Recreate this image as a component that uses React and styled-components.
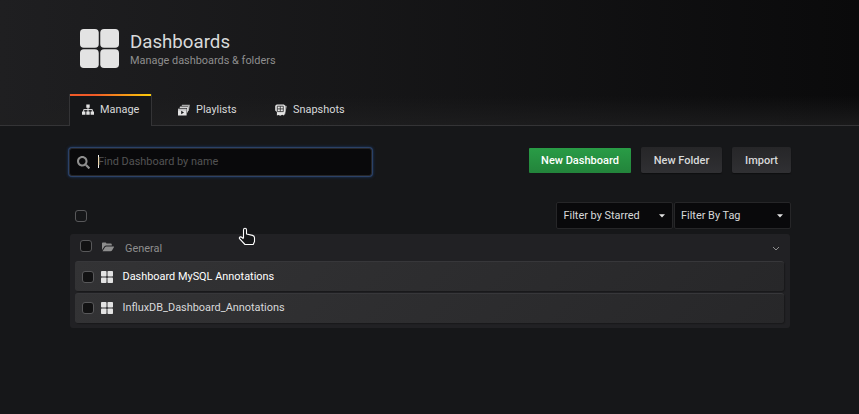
import React from "react";
import styled, { createGlobalStyle, css } from "styled-components";
import { FaSearch } from "react-icons/fa";

const GlobalStyle = createGlobalStyle`
  * { box-sizing: border-box; }
  html, body { margin: 0; background: #161719; }
  body {
    font-family: Roboto, "Liberation Sans", sans-serif;
    font-size: 10.92px;
    line-height: 16px;
    color: #d8d9da;
    overflow: hidden;
  }
`;

const Page = styled.div`
  position: relative;
  width: 859px;
  height: 414px;
  background: #161719;
`;

const Header = styled.header`
  display: flex;
  flex-direction: column;
  justify-content: space-between;
  height: 126px;
  padding: 29px 69px 0;
  border-bottom: 1px solid #343436;
  background:
    linear-gradient(180deg, rgba(31, 31, 32, 0) 96px, rgba(31, 31, 32, 0.75) 125px),
    linear-gradient(90deg, #1f1f21 0%, #0a0a0b 100%);
`;

const Title = styled.div`
  display: flex;
  padding-left: 11px;
  gap: 11px;
`;

const TitleText = styled.div`
  padding-top: 2px;
`;

const Heading = styled.h1`
  margin: 0;
  font-size: 18.7px;
  font-weight: 400;
  line-height: 22px;
`;

const Subtitle = styled.div`
  color: #8e8e8e;
  line-height: 15px;
`;

const Tabs = styled.nav`
  display: flex;
  height: 32px;
  margin-bottom: -1px;
`;

const Tab = styled.a`
  display: flex;
  align-items: center;
  gap: 6px;
  width: ${(p) => p.$width}px;
  padding: 0 0 0 ${(p) => p.$inset}px;
  border: 1px solid transparent;
  border-width: 0 1px;
  svg { margin-top: -1px; }
  ${(p) =>
    p.$active &&
    css`
      border-color: #343436;
      background: linear-gradient(90deg, #f05a28 30%, #fbca0a 99%) top / 100% 2px no-repeat, #161719;
    `}
`;

const Body = styled.main`
  width: 722px;
  margin-left: 69px;
  padding-top: 21px;
`;

const Actions = styled.div`
  display: flex;
  gap: 10px;
  height: 30px;
`;

const Search = styled.label`
  display: flex;
  align-items: center;
  width: 303px;
  height: 28px;
  margin: 1px auto 0 0;
  padding: 0 0 0 7px;
  border: 1px solid #262628;
  border-radius: 3px;
  background: #09090b;
  box-shadow: 0 0 0 1px #2b4166, 0 0 3px 1px #1c3c6b;
  color: #8e8e8e;
  svg { margin-top: 1px; }
`;

const Caret = styled.span`
  width: 1px;
  height: 13px;
  margin: -2px 0 0 8px;
  background: #f4f4f4;
`;

const Placeholder = styled.span`
  margin: -1px 0 0 -1px;
  color: #535354;
`;

const Button = styled.button`
  width: ${(p) => p.$width}px;
  height: 26px;
  padding: 0;
  border: 0;
  border-radius: 2px;
  font: 500 11px/27px Roboto, sans-serif;
  color: #d8d9da;
  background: linear-gradient(180deg, #262628, #303033);
  box-shadow: 0 1px 1px #0e0f10;
  ${(p) =>
    p.$primary &&
    css`
      height: 25px;
      margin-top: 1px;
      line-height: 24px;
      color: #fff;
      border-radius: 1px;
      background: linear-gradient(180deg, #299c46, #23843b);
      box-shadow: none;
    `}
`;

const Filters = styled.div`
  display: flex;
  gap: 1px;
  height: 27px;
  margin: 25px 0 5px;
  padding-left: 6px;
`;

const Check = styled.span`
  flex: none;
  width: 12px;
  height: 12px;
  border: 1px solid #58585a;
  border-radius: 3px;
  background: #121213;
`;

const FilterCheck = styled(Check)`
  margin: 8px auto 0 0;
  background: transparent;
`;

const Select = styled.div`
  display: flex;
  align-items: center;
  justify-content: space-between;
  width: ${(p) => p.$width}px;
  padding: 0 ${(p) => p.$end}px 0 ${(p) => p.$inset}px;
  border: 1px solid #262628;
  border-radius: 2px;
  background: #09090b;
  svg { margin-top: 1px; }
`;

const Section = styled.section`
  display: flex;
  flex-direction: column;
  gap: 2px;
  width: 720px;
  height: 94px;
  margin-left: 1px;
  padding: 0 6px 0 5px;
  border-radius: 3px;
  background: #212124;
`;

const SectionHead = styled.div`
  display: flex;
  height: 25px;
  padding: 6px 4px 0 5px;
  color: #8e8e8e;
`;

const FolderSvg = styled.svg`
  margin: 2px 10px 0;
`;

const SectionName = styled.span`
  flex: 1;
  padding-top: 1px;
`;

const Item = styled.div`
  display: flex;
  height: 30px;
  padding: 9px 0 0 7px;
  border-top: 1px solid #37373a;
  border-radius: 3px;
  background: linear-gradient(135deg, #333335, #272729);
  box-shadow: 1px 1px 1px #19191b;
  & > svg { margin: 0 10px 0 7px; }
  & + & { padding-top: 8px; }
`;

const ItemName = styled.span`
  margin: -2px 0 0 -0.5px;
  color: ${(p) => (p.$bright ? "#ffffff" : "#d8d9da")};
`;

const Pointer = styled.svg`
  position: absolute;
  left: 238px;
  top: 227px;
`;

function Grid({ size, gap, radius }) {
  const tile = (size - gap) / 2;
  const far = tile + gap;
  return (
    <svg width={size} height={size} fill="#e3e3e3">
      {[[0, 0], [far, 0], [0, far], [far, far]].map(([x, y]) => (
        <rect key={`${x}-${y}`} x={x} y={y} width={tile} height={tile} rx={radius} />
      ))}
    </svg>
  );
}

function SitemapIcon() {
  return (
    <svg width="12" height="11" viewBox="0 0 12 11" fill="#e3e3e3">
      <path d="M4.3.4h3.4v3.4H4.3zM0 7.5h3.4v3.3H0zM4.3 7.5h3.4v3.3H4.3zM8.6 7.5H12v3.3H8.6z" />
      <path d="M6 3v5M1.7 8V5.6h8.6V8" fill="none" stroke="#e3e3e3" />
    </svg>
  );
}

function PlaylistIcon() {
  return (
    <svg width="12" height="12" viewBox="0 0 12 12">
      <path d="M4 .8h7.9L10.8 7H10V2H3.6z" fill="#aaa" />
      <path d="M2 2.6h8.5L9.8 8.6H9V4H1.6z" fill="#d0d0d0" />
      <path d="M0 4.7h8.6v6.8H0z" fill="#e3e3e3" />
      <path d="M0 5.9h8.6" stroke="#77777a" strokeWidth=".5" />
      <path d="M3.2 6.8 6 8.5l-2.8 1.7z" fill="#161719" />
    </svg>
  );
}

function SnapshotIcon() {
  return (
    <svg width="12" height="12" viewBox="0 0 12 12">
      <path d="M8 1.2 11.8 2l-1.6 8.2L8 11z" fill="#999" />
      <path d="M.2 1.8 1.7.6h7.2l1.3 1.2v6L9 11.4l-1.8-.6-2 .9-1.6-.8-1.7.5V8L.2 6.5z" fill="#e3e3e3" />
      <path d="M2.3 2.2h6v5.4h-6zM5.3 2.2v5.4M2.3 4.9h6" fill="none" stroke="#29292b" strokeWidth=".8" />
    </svg>
  );
}

function FolderIcon() {
  return (
    <FolderSvg width="13" height="10" viewBox="0 0 13 10" fill="#8e8e8e">
      <path d="M0 8V1.3Q0 .4.9.4h2.6q.8 0 .8.8v.4h4.6q.9 0 .9.9v1H4.2q-1 0-1.7.8z" />
      <path d="M.5 9.2 3 5.3q.5-.9 1.4-.9h7.2q.8 0 .3.8L10 8.4q-.5.8-1.5.8z" />
    </FolderSvg>
  );
}

const DownArrow = () => (
  <svg width="6" height="4"><path d="M0 .3h6L3 3.5z" fill="#e3e3e3" /></svg>
);

const rows = [
  { name: "Dashboard MySQL Annotations", bright: true },
  { name: "InfluxDB_Dashboard_Annotations", bright: false },
];

export default function App() {
  return (
    <Page>
      <GlobalStyle />
      <Header>
        <Title>
          <Grid size={39} gap={1.5} radius={3.8} />
          <TitleText>
            <Heading>Dashboards</Heading>
            <Subtitle>Manage dashboards &amp; folders</Subtitle>
          </TitleText>
        </Title>
        <Tabs>
          <Tab $active $width={83} $inset={12}><SitemapIcon />Manage</Tab>
          <Tab $width={97} $inset={25}><PlaylistIcon />Playlists</Tab>
          <Tab $width={97} $inset={25}><SnapshotIcon />Snapshots</Tab>
        </Tabs>
      </Header>
      <Body>
        <Actions>
          <Search>
            <FaSearch size={13} />
            <Caret />
            <Placeholder>Find Dashboard by name</Placeholder>
          </Search>
          <Button $primary $width={102}>New Dashboard</Button>
          <Button $width={81}>New Folder</Button>
          <Button $width={59}>Import</Button>
        </Actions>
        <Filters>
          <FilterCheck />
          <Select $width={117} $inset={6.5} $end={7}>Filter by Starred<DownArrow /></Select>
          <Select $width={117} $inset={6} $end={7}>Filter By Tag<DownArrow /></Select>
        </Filters>
        <Section>
          <SectionHead>
            <Check />
            <FolderIcon />
            <SectionName>General</SectionName>
            <svg width="8" height="16" fill="none" stroke="#8e8e8e"><path d="m1 7 3 3 3-3" /></svg>
          </SectionHead>
          {rows.map((row) => (
            <Item key={row.name}>
              <Check />
              <Grid size={12} gap={1} radius={0.8} />
              <ItemName $bright={row.bright}>{row.name}</ItemName>
            </Item>
          ))}
        </Section>
      </Body>
      <Pointer width="18" height="19" viewBox="0 0 18 19">
        <path
          d="M5.5 11V3Q5.5 1.3 7 1.3T8.5 3v4l6 1.4q2 .5 2 2.3v3.8l-1.3 3H7L1.5 11.7q-.5-1.4.8-1.8 1.3-.3 3.2 2"
          fill="#161719"
          stroke="#fff"
          strokeWidth="1.1"
          strokeLinejoin="round"
        />
      </Pointer>
    </Page>
  );
}
